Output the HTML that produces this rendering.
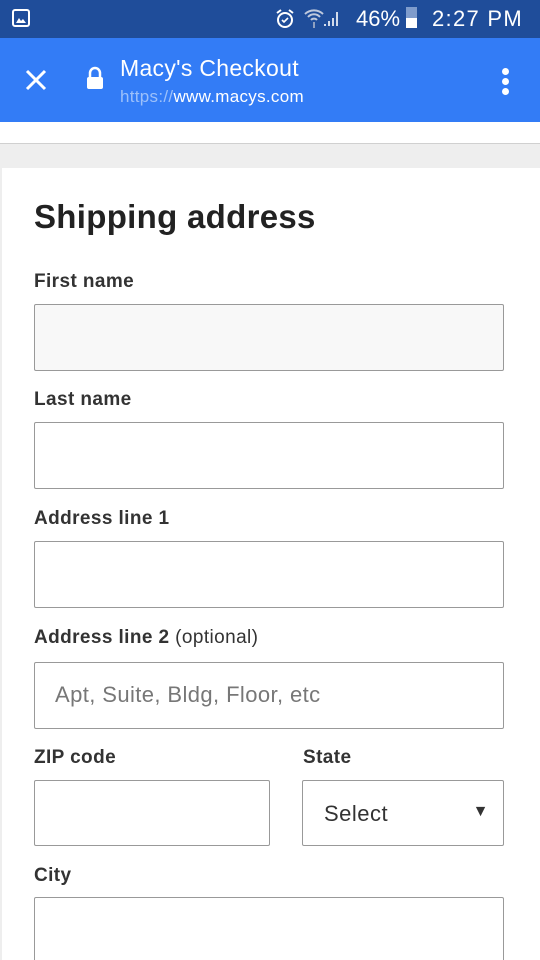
<!DOCTYPE html>
<html><head><style>
html,body{margin:0;width:540px;height:960px;overflow:hidden}
body{background:#eeeeee;font-family:"Liberation Sans",sans-serif;position:relative}
.sb{position:absolute;top:0;left:0;width:540px;height:38px;background:#1f4d9a;color:#fff}
.tb{position:absolute;top:38px;left:0;width:540px;height:84px;background:#337cf6;color:#fff}
.strip{position:absolute;top:122px;left:0;width:540px;height:21px;background:#fff;border-bottom:1px solid #d0d0d0}
.card{position:absolute;top:168px;left:2px;width:538px;height:792px;background:#fff}
.lbl{position:absolute;left:34px;font-size:19px;letter-spacing:0.4px;font-weight:bold;color:#333}
.in{position:absolute;box-sizing:border-box;border:1px solid #999;background:#fff;border-radius:2px}
</style></head><body>
<div class="sb">
<svg style="position:absolute;left:12px;top:9px" width="18" height="18"><rect x="1" y="1" width="16" height="16" rx="2" fill="none" stroke="#fff" stroke-width="2"/><path d="M4 14 L7 9 L9 12 L11 10 L14 14Z" fill="#fff"/></svg>
<svg style="position:absolute;left:275px;top:8px" width="20" height="22"><circle cx="10" cy="12" r="7" fill="none" stroke="#fff" stroke-width="2"/><path d="M7 12l2 2 4-4" stroke="#fff" stroke-width="1.6" fill="none"/><path d="M2 5l4-3M18 5l-4-3" stroke="#fff" stroke-width="2"/></svg>
<svg style="position:absolute;left:303px;top:6px" width="22" height="22"><path d="M2 8a13 13 0 0 1 18 0M5 11a8 8 0 0 1 12 0M8 14a4 4 0 0 1 6 0" stroke="#bfc9dd" stroke-width="2" fill="none"/><path d="M11 16v6" stroke="#8fa0c0" stroke-width="2"/></svg>
<svg style="position:absolute;left:322px;top:8px" width="20" height="20"><path d="M2 18h2v-2H2zM6 18h2v-5H6zM10 18h2v-8h-2zM14 18h2V4h-2z" fill="#fff" opacity=".8"/></svg>
<div style="position:absolute;left:356px;top:6px;font-size:22px">46%</div>
<div style="position:absolute;left:406px;top:7px;width:11px;height:21px;background:#7f9ccc"><div style="position:absolute;bottom:0;width:11px;height:10px;background:#fff"></div></div>
<div style="position:absolute;left:432px;top:6px;font-size:22px;letter-spacing:1.3px">2:27 PM</div>
</div>
<div class="tb">
<svg style="position:absolute;left:25px;top:31px" width="22" height="22"><path d="M2 2L20 20M20 2L2 20" stroke="#fff" stroke-width="3"/></svg>
<svg style="position:absolute;left:86px;top:28px" width="18" height="24"><path d="M4 11V7a5 5 0 0 1 10 0v4" stroke="#fff" stroke-width="2.5" fill="none"/><rect x="1" y="11" width="16" height="12" rx="2" fill="#fff"/></svg>
<div style="position:absolute;left:120px;top:17px;font-size:23px;letter-spacing:0.3px">Macy's Checkout</div>
<div style="position:absolute;left:120px;top:49px;font-size:17px;letter-spacing:0.3px"><span style="color:#9cc0fa">https://</span>www.macys.com</div>
<div style="position:absolute;left:502px;top:30px;width:7px;height:7px;border-radius:50%;background:#fff;box-shadow:0 10px 0 #fff,0 20px 0 #fff"></div>
</div>
<div class="strip"></div>
<div class="card"></div>
<div style="position:absolute;left:34px;top:198px;font-size:33px;letter-spacing:0.3px;font-weight:bold;color:#222">Shipping address</div>
<div class="lbl" style="top:271px">First name</div>
<div class="in" style="left:34px;top:304px;width:470px;height:67px;background:#f8f8f8"></div>
<div class="lbl" style="top:389px">Last name</div>
<div class="in" style="left:34px;top:422px;width:470px;height:67px"></div>
<div class="lbl" style="top:508px">Address line 1</div>
<div class="in" style="left:34px;top:541px;width:470px;height:67px"></div>
<div class="lbl" style="top:627px">Address line 2 <span style="font-weight:normal">(optional)</span></div>
<div class="in" style="left:34px;top:662px;width:470px;height:67px;color:#777;font-size:22px;letter-spacing:0.4px;padding:19px 0 0 20px">Apt, Suite, Bldg, Floor, etc</div>
<div class="lbl" style="top:747px">ZIP code</div>
<div class="in" style="left:34px;top:780px;width:236px;height:66px"></div>
<div class="lbl" style="top:747px;left:303px">State</div>
<div class="in" style="left:302px;top:780px;width:202px;height:66px;font-size:22px;letter-spacing:0.5px;color:#333;padding:20px 0 0 21px">Select<span style="position:absolute;right:14px;top:22px;font-size:16px">▼</span></div>
<div class="lbl" style="top:865px">City</div>
<div class="in" style="left:34px;top:897px;width:470px;height:80px"></div>
</body></html>
